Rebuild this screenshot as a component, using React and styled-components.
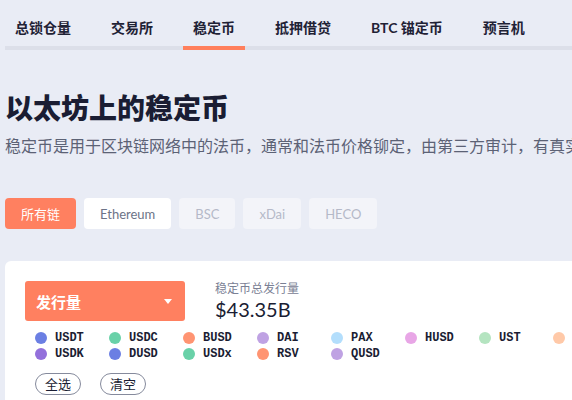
import React from "react";
import styled, { createGlobalStyle } from "styled-components";

const Global = createGlobalStyle`
  html, body { margin: 0; padding: 0; background: #e9ecf5; overflow: hidden; }
  body { font-family: Lato, "Noto Sans CJK SC", sans-serif; }
  * { box-sizing: border-box; }
`;

const Page = styled.div`
  width: 720px;
  padding-left: 5px;
  display: flex;
  flex-direction: column;
  align-items: flex-start;
`;

const Nav = styled.nav`
  display: flex;
  gap: 20px;
  width: 100%;
  border-bottom: 4px solid #dcdfe9;
`;

const Tab = styled.div`
  padding: 18px 10px 8px;
  margin-bottom: -4px;
  line-height: 20px;
  font-size: 14px;
  font-weight: 700;
  color: #1f2235;
  border-bottom: 4px solid ${(p) => (p.$active ? "#ff7f5c" : "transparent")};
  white-space: nowrap;
`;

const Title = styled.h1`
  margin: 38px 0 0;
  font-size: 28px;
  line-height: 40px;
  font-weight: 800;
  color: #1a1d33;
`;

const Subtitle = styled.p`
  margin: 6px 0 0;
  font-size: 16px;
  line-height: 24px;
  color: #5c6275;
  white-space: nowrap;
`;

const Chains = styled.div`
  display: flex;
  gap: 8px;
  margin-top: 40px;
`;

const Chain = styled.div`
  height: 31px;
  padding: 0 16px;
  display: flex;
  align-items: center;
  border-radius: 4px;
  font-size: 13px;
  background: ${(p) => (p.$variant === "active" ? "#ff8060" : p.$variant === "on" ? "#ffffff" : "#f3f4f9")};
  color: ${(p) => (p.$variant === "active" ? "#ffffff" : p.$variant === "on" ? "#6c7387" : "#b5b9c8")};
`;

const Card = styled.section`
  margin-top: 32px;
  width: 700px;
  background: #ffffff;
  border-radius: 6px 0 0 0;
  padding: 20px;
  min-height: 160px;
`;

const Header = styled.div`
  display: flex;
  gap: 30px;
`;

const Dropdown = styled.div`
  width: 160px;
  height: 40px;
  background: #ff8060;
  border-radius: 3px;
  display: flex;
  align-items: center;
  justify-content: space-between;
  padding: 0 13px 0 11px;
  color: #fff;
  font-size: 15px;
  font-weight: 700;
`;

const Caret = styled.span`
  width: 0;
  height: 0;
  border-left: 4px solid transparent;
  border-right: 4px solid transparent;
  border-top: 5px solid #fff;
`;

const Stat = styled.div`
  display: flex;
  flex-direction: column;
`;

const StatLabel = styled.div`
  font-size: 12px;
  line-height: 16px;
  color: #7a8094;
`;

const StatValue = styled.div`
  font-size: 20px;
  line-height: 24px;
  color: #1a1d33;
`;

const Legend = styled.div`
  display: grid;
  grid-template-columns: repeat(8, 74px);
  margin: 9px 0 0 10px;
`;

const LegendItem = styled.div`
  display: flex;
  align-items: center;
  gap: 8px;
  height: 16px;
  font-family: "Liberation Mono", monospace;
  font-weight: 700;
  font-size: 12px;
  color: #1a1d33;
  white-space: nowrap;
`;

const Dot = styled.span`
  width: 12px;
  height: 12px;
  border-radius: 50%;
  background: ${(p) => p.$color};
  flex: none;
`;

const Actions = styled.div`
  display: flex;
  gap: 19px;
  margin: 11px 0 0 10px;
`;

const Pill = styled.button`
  height: 22px;
  padding: 0 9px;
  border: 1px solid #858a9c;
  border-radius: 11px;
  background: #fff;
  font-family: Lato, "Noto Sans CJK SC", sans-serif;
  font-size: 13px;
  line-height: 20px;
  color: #1a1d33;
`;

const tabs = ["总锁仓量", "交易所", "稳定币", "抵押借贷", "BTC 锚定币", "预言机"];
const chains = [
  ["所有链", "active"],
  ["Ethereum", "on"],
  ["BSC", "off"],
  ["xDai", "off"],
  ["HECO", "off"],
];
const palette = ["#6b7fe3", "#69d1a8", "#ff9472", "#bfa2e3", "#b3defc", "#e8a6e6", "#b4e4c0", "#ffc9a8", "#9370db"];
const coins = ["USDT", "USDC", "BUSD", "DAI", "PAX", "HUSD", "UST", "USDN", "USDK", "DUSD", "USDx", "RSV", "QUSD"];

export default function App() {
  return (
    <>
      <Global />
      <Page>
        <Nav>
          {tabs.map((t) => (
            <Tab key={t} $active={t === "稳定币"}>{t}</Tab>
          ))}
        </Nav>
        <Title>以太坊上的稳定币</Title>
        <Subtitle>稳定币是用于区块链网络中的法币，通常和法币价格铆定，由第三方审计，有真实资产抵押</Subtitle>
        <Chains>
          {chains.map(([n, v]) => (
            <Chain key={n} $variant={v}>{n}</Chain>
          ))}
        </Chains>
        <Card>
          <Header>
            <Dropdown>
              发行量
              <Caret />
            </Dropdown>
            <Stat>
              <StatLabel>稳定币总发行量</StatLabel>
              <StatValue>$43.35B</StatValue>
            </Stat>
          </Header>
          <Legend>
            {coins.map((c, i) => (
              <LegendItem key={c}>
                <Dot $color={palette[i % palette.length]} />
                {c}
              </LegendItem>
            ))}
          </Legend>
          <Actions>
            <Pill>全选</Pill>
            <Pill>清空</Pill>
          </Actions>
        </Card>
      </Page>
    </>
  );
}
